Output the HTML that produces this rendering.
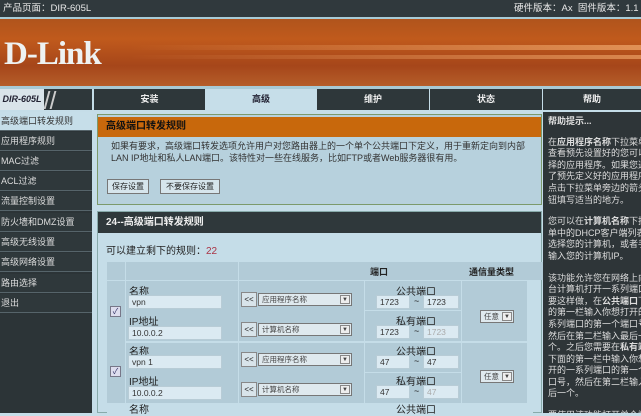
<!DOCTYPE html>
<html><head><meta charset="utf-8"><style>
*{margin:0;padding:0;box-sizing:border-box}
body{width:641px;height:413px;overflow:hidden;position:relative;background:#c5dde8;font-family:"Liberation Sans","Noto Sans CJK SC",sans-serif;font-size:9px;color:#222}
.a{position:absolute}
.top{left:0;top:0;width:641px;height:17px;background:#30393d;color:#e8e8e8;font-size:9.5px;line-height:17px;overflow:hidden;white-space:nowrap}
.ban{left:0;top:19px;width:641px;height:67px;background:linear-gradient(180deg,#b0541c 0%,#c05a1c 30%,#a6461a 70%,#b55e2a 100%);overflow:hidden}
.nav{top:89px;height:21px;background:#2e373a;color:#eee;text-align:center;line-height:21px;font-size:9px;font-weight:bold}
.side{left:0;top:112px;width:92px;height:301px;background:#2c3437}
.si{position:absolute;left:0;width:92px;height:19px;background:#2f383b;color:#ddd;font-size:9px;line-height:19px;padding-left:1px;border-bottom:1px solid #56646a}
.help{left:543px;top:112px;width:98px;height:301px;background:#2e3538;color:#ddd;overflow:hidden}
.help .t{position:absolute;left:5px;top:4px;width:112px;font-size:9px;line-height:11.6px}
.in{position:absolute;background:#dbeaf2;border:1px solid #b8ccd6;height:14px;font-size:8.5px;line-height:12px;padding-left:3px;color:#333}
.sel{position:absolute;background:#dfe9ee;border:1px solid #777;height:13px;font-size:7.5px;line-height:11px;padding-left:3px;color:#444}
.sel b{position:absolute;right:1px;top:1px;width:10px;height:9px;background:#eee;border:1px solid #888;font-size:6px;line-height:8px;text-align:center}
.ll{position:absolute;width:16px;height:15px;background:#d8e4ea;border:1px solid #888;font-size:8px;line-height:13px;text-align:center}
.cell{position:absolute;background:#b2cbd7}
.lbl{position:absolute;font-size:10px;color:#222}
</style></head><body>
<div class="a top"><span style="padding-left:3px">产品页面：DIR-605L</span><span style="position:absolute;left:514px">硬件版本：Ax&nbsp;&nbsp;固件版本：1.1</span></div>
<div class="a" style="left:0;top:17px;width:641px;height:2px;background:#a8cbd6"></div>
<div class="a ban">
<div class="a" style="left:130px;top:26px;width:511px;height:5px;background:linear-gradient(90deg,rgba(230,150,90,0),rgba(235,160,100,.8))"></div>
<div class="a" style="left:130px;top:36px;width:511px;height:4px;background:linear-gradient(90deg,rgba(230,150,90,0),rgba(235,160,100,.7))"></div>
<div class="a" style="left:4px;top:17px;color:#eef2f2;font-family:'Liberation Serif',serif;font-weight:bold;font-size:33px;letter-spacing:-1px">D-Link</div>
</div>
<div class="a" style="left:0;top:86px;width:641px;height:3px;background:#a8cbd6"></div>
<div class="a nav" style="left:0;width:92px;background:#2e373a"><div class="a" style="left:0;top:0;width:44px;height:21px;background:#d9e4ea;color:#223;font-style:italic;font-size:9px">DIR-605L</div><div class="a" style="left:46px;top:2px;width:2px;height:18px;background:#ccc;transform:skewX(-15deg)"></div><div class="a" style="left:52px;top:2px;width:2px;height:18px;background:#ccc;transform:skewX(-15deg)"></div></div>
<div class="a nav" style="left:94px;width:111px">安装</div>
<div class="a nav" style="left:206px;width:110px;background:#c6dee9;color:#223">高级</div>
<div class="a nav" style="left:317px;width:112px">维护</div>
<div class="a nav" style="left:430px;width:112px">状态</div>
<div class="a nav" style="left:543px;width:98px">帮助</div>
<div class="a side">
<div class="si" style="top:0;background:#c6dee9;color:#333">高级端口转发规则</div>
<div class="si" style="top:20px">应用程序规则</div>
<div class="si" style="top:40px">MAC过滤</div>
<div class="si" style="top:60px">ACL过滤</div>
<div class="si" style="top:80px">流量控制设置</div>
<div class="si" style="top:101px">防火墙和DMZ设置</div>
<div class="si" style="top:121px">高级无线设置</div>
<div class="si" style="top:141px">高级网络设置</div>
<div class="si" style="top:162px">路由选择</div>
<div class="si" style="top:182px">退出</div>
</div>
<div class="a" style="left:97px;top:114px;width:445px;height:91px;background:#b7d1dd;border:1px solid #7c9a6c">
<div class="a" style="left:0;top:2px;width:443px;height:20px;background:#c8680c;color:#111;font-weight:bold;font-size:10px;line-height:20px;padding-left:8px">高级端口转发规则</div>
<div class="a" style="left:13px;top:25px;width:420px;font-size:9px;line-height:12px;color:#333">如果有要求，高级端口转发选项允许用户对您路由器上的一个单个公共端口下定义，用于重新定向到内部LAN IP地址和私人LAN端口。该特性对一些在线服务，比如FTP或者Web服务器很有用。</div>
<div class="a" style="left:9px;top:64px;width:42px;height:15px;background:#d6e5ec;border:1px solid #777;font-size:8px;line-height:13px;text-align:center">保存设置</div>
<div class="a" style="left:62px;top:64px;width:60px;height:15px;background:#d6e5ec;border:1px solid #777;font-size:8px;line-height:13px;text-align:center">不要保存设置</div>
</div>
<div class="a" style="left:97px;top:211px;width:445px;height:202px;background:#c5dde8;border:1px solid #8aa">
<div class="a" style="left:0;top:0;width:443px;height:21px;background:#2f383b;color:#eee;font-weight:bold;font-size:10px;line-height:21px;padding-left:8px">24--高级端口转发规则</div>
<div class="a" style="left:8px;top:30px;font-size:10px;color:#222">可以建立剩下的规则：<span style="color:#a34">22</span></div>
</div>
<div class="a" style="left:107px;top:262px;width:426px;height:151px;background:#c5dde8">
<div class="cell" style="left:0;top:0;width:18px;height:18px"></div>
<div class="cell" style="left:19px;top:0;width:112px;height:18px"></div>
<div class="cell" style="left:132px;top:0;width:320px;height:18px;background:#b2cbd7"></div>
<div class="lbl" style="left:263px;top:3px;font-weight:bold;font-size:9px">端口</div>
<div class="lbl" style="left:362px;top:3px;font-weight:bold;font-size:9px">通信量类型</div>
<div class="cell" style="left:0;top:19px;width:18px;height:110px"></div>
</div>
<div class="a" style="left:107px;top:281px;width:426px;height:132px">
<div class="cell" style="left:0;top:0;width:18px;height:60px"></div>
<div class="cell" style="left:19px;top:0;width:112px;height:60px"></div>
<div class="cell" style="left:132px;top:0;width:125px;height:60px"></div>
<div class="cell" style="left:258px;top:0;width:96px;height:29px"></div>
<div class="cell" style="left:258px;top:30px;width:96px;height:30px"></div>
<div class="cell" style="left:355px;top:0;width:65px;height:60px"></div>
<div class="cell" style="left:0;top:62px;width:18px;height:60px"></div>
<div class="cell" style="left:19px;top:62px;width:112px;height:60px"></div>
<div class="cell" style="left:132px;top:62px;width:125px;height:60px"></div>
<div class="cell" style="left:258px;top:62px;width:96px;height:29px"></div>
<div class="cell" style="left:258px;top:92px;width:96px;height:30px"></div>
<div class="cell" style="left:355px;top:62px;width:65px;height:60px"></div>
</div>
<div class="a" style="left:110px;top:306px;width:11px;height:11px;background:#dde;border:1px solid #778;font-size:8px;line-height:9px;text-align:center;color:#336">✓</div>
<div class="a" style="left:110px;top:366px;width:11px;height:11px;background:#dde;border:1px solid #778;font-size:8px;line-height:9px;text-align:center;color:#336">✓</div>
<div class="lbl" style="left:129px;top:283px">名称</div>
<div class="in" style="left:128px;top:295px;width:94px">vpn</div>
<div class="lbl" style="left:129px;top:313px">IP地址</div>
<div class="in" style="left:128px;top:326px;width:94px">10.0.0.2</div>
<div class="lbl" style="left:129px;top:343px">名称</div>
<div class="in" style="left:128px;top:355px;width:94px">vpn 1</div>
<div class="lbl" style="left:129px;top:373px">IP地址</div>
<div class="in" style="left:128px;top:386px;width:94px">10.0.0.2</div>
<div class="lbl" style="left:129px;top:401px">名称</div>
<div class="ll" style="left:241px;top:292px">&lt;&lt;</div><div class="sel" style="left:258px;top:293px;width:94px">应用程序名称<b>▼</b></div>
<div class="ll" style="left:241px;top:322px">&lt;&lt;</div><div class="sel" style="left:258px;top:323px;width:94px">计算机名称<b>▼</b></div>
<div class="ll" style="left:241px;top:352px">&lt;&lt;</div><div class="sel" style="left:258px;top:353px;width:94px">应用程序名称<b>▼</b></div>
<div class="ll" style="left:241px;top:382px">&lt;&lt;</div><div class="sel" style="left:258px;top:383px;width:94px">计算机名称<b>▼</b></div>
<div class="lbl" style="left:396px;top:283px">公共端口</div>
<div class="in" style="left:376px;top:295px;width:34px">1723</div><span class="a" style="left:414px;top:296px">~</span><div class="in" style="left:423px;top:295px;width:36px">1723</div>
<div class="lbl" style="left:396px;top:313px">私有端口</div>
<div class="in" style="left:376px;top:325px;width:34px">1723</div><span class="a" style="left:414px;top:326px">~</span><div class="in" style="left:423px;top:325px;width:36px;color:#aaa">1723</div>
<div class="lbl" style="left:396px;top:343px">公共端口</div>
<div class="in" style="left:376px;top:355px;width:34px">47</div><span class="a" style="left:414px;top:356px">~</span><div class="in" style="left:423px;top:355px;width:36px">47</div>
<div class="lbl" style="left:396px;top:373px">私有端口</div>
<div class="in" style="left:376px;top:385px;width:34px">47</div><span class="a" style="left:414px;top:386px">~</span><div class="in" style="left:423px;top:385px;width:36px;color:#aaa">47</div>
<div class="lbl" style="left:396px;top:401px">公共端口</div>
<div class="sel" style="left:480px;top:310px;width:34px">任意<b>▼</b></div>
<div class="sel" style="left:480px;top:370px;width:34px">任意<b>▼</b></div>
<div class="a help"><div class="t">
<div style="font-weight:bold;margin-bottom:9px">帮助提示...</div>
<div style="margin-bottom:10px">在<b>应用程序名称</b>下拉菜单中查看预先设置好的您可以选择的应用程序。如果您选择了预先定义好的应用程序，点击下拉菜单旁边的箭头按钮填写适当的地方。</div>
<div style="margin-bottom:10px">您可以在<b>计算机名称</b>下拉菜单中的DHCP客户端列表处选择您的计算机，或者手动输入您的计算机IP。</div>
<div style="margin-bottom:10px">该功能允许您在网络上向一台计算机打开一系列端口。要这样做，在<b>公共端口</b>下面的第一栏输入你想打开的一系列端口的第一个端口号，然后在第二栏输入最后一个。之后您需要在<b>私有端口</b>下面的第一栏中输入你想打开的一系列端口的第一个端口号，然后在第二栏输入最后一个。</div>
<div>要使用该功能打开单个端口</div>
</div></div>
</body></html>
